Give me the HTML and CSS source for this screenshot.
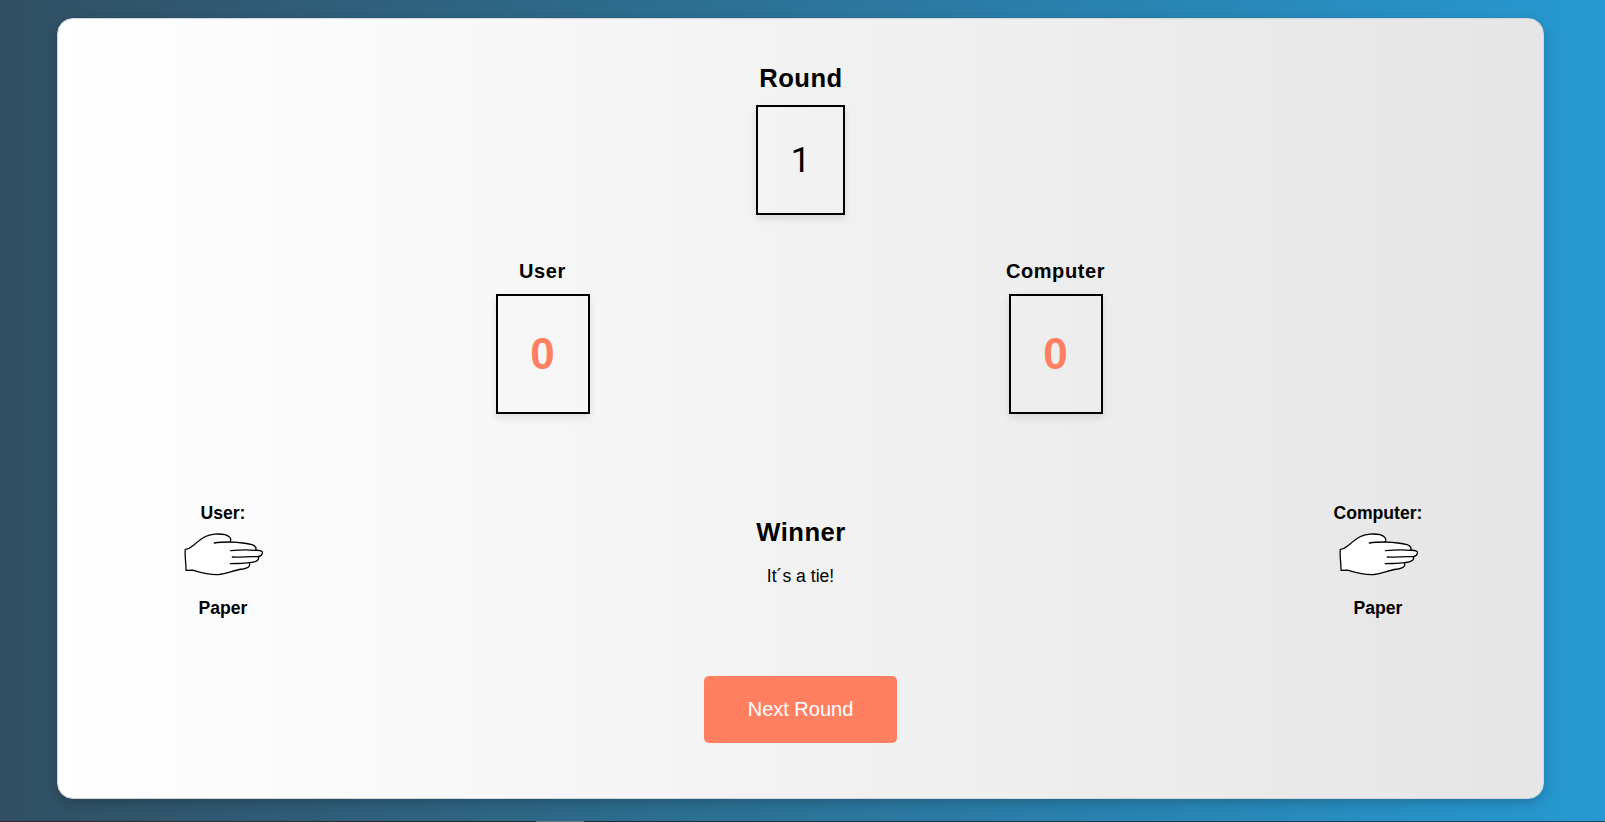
FILE: index.html
```html
<!DOCTYPE html>
<html lang="en">
<head>
<meta charset="utf-8">
<title>Rock Paper Scissors</title>
<link rel="stylesheet" href="styles.css">
</head>
<body>
<svg class="defs" aria-hidden="true">
  <symbol id="paper" viewBox="0 0 80.500 44">
    <path d="M2.300 17.300 C6 17 8 15.500 10.500 13.200 C15 9.500 18 7 22 4.800 C27 2 36 1.300 42 2.700 C46 4 49 6 47.200 10 C55 10.300 63 11 69 12.700 C73 14 73.500 16 72.600 18.300 C77 18 80 19 79.500 21.200 C78.500 24 76.500 24.500 75 24.700 C77 27.500 74 30 66.500 30.700 C67.500 34.500 65 36.200 60 37 C51 38 45 41.300 36 42.500 C25 43 16 40 10 38.200 L3 38.300 C3.200 31 1.500 24 2.300 17.300 Z" fill="#fff" stroke="#000" stroke-width="1.300" stroke-linejoin="round"/>
    <path d="M31.300 11 C36 10.200 42 10 47.200 10 M47.700 18.600 C55 18 64 17.700 72.600 18.300 M49.300 25 C57 25.500 68 24 75 24.700 M47.300 31.700 C54 31.200 60 32 66.500 30.700" fill="none" stroke="#000" stroke-width="1.300" stroke-linecap="round"/>
  </symbol>
</svg>
<main class="card">
  <section class="round">
    <h2 class="title">Round</h2>
    <div class="round-box">1</div>
  </section>
  <section class="scores">
    <div class="score">
      <h3 class="score-name">User</h3>
      <div class="score-box">0</div>
    </div>
    <div class="score">
      <h3 class="score-name">Computer</h3>
      <div class="score-box">0</div>
    </div>
  </section>
  <section class="result">
    <div class="pick">
      <p class="pick-text">User:</p>
      <svg class="hand"><use href="#paper"/></svg>
      <p class="pick-text">Paper</p>
    </div>
    <div class="winner">
      <h2 class="title">Winner</h2>
      <p class="winner-text">It´s a tie!</p>
    </div>
    <div class="pick">
      <p class="pick-text">Computer:</p>
      <svg class="hand"><use href="#paper"/></svg>
      <p class="pick-text">Paper</p>
    </div>
  </section>
  <button class="next">Next Round</button>
</main>
<footer class="strip"><span class="strip-mark"></span></footer>
</body>
</html>
```
FILE: styles.css
```css
* { box-sizing: border-box; margin: 0; padding: 0; }
body {
  height: 822px;
  padding-top: 18px;
  display: flex;
  flex-direction: column;
  overflow: hidden;
  font-family: "Liberation Sans", Arial, sans-serif;
  color: #000;
  background: linear-gradient(to right, #314f62, #2699d2);
}
.defs { position: absolute; width: 0; height: 0; }
.card {
  width: 1487px;
  height: 781px;
  margin-left: 57px;
  padding-top: 43px;
  display: flex;
  flex-direction: column;
  align-items: center;
  border: 1px solid #d3d6d8;
  border-radius: 16px;
  background: linear-gradient(to right, #fff, #e5e5e5) border-box;
  box-shadow: 0 4px 12px rgba(0, 0, 0, .2);
}
.round { height: 193px; display: flex; flex-direction: column; align-items: center; }
.title { padding-left: 1px; font-size: 25.6px; line-height: 32px; letter-spacing: .5px; }
.round-box {
  width: 89px;
  height: 110px;
  margin-top: 11px;
  display: grid;
  place-items: center;
  border: 2px solid #000;
  font-family: Roboto, sans-serif;
  font-size: 35px;
  box-shadow: 0 4px 8px rgba(0, 0, 0, .1);
}
.scores { width: 1026px; height: 238px; margin-right: 3px; display: flex; }
.score { flex: 1; display: flex; flex-direction: column; align-items: center; }
.score-name { font-size: 20px; line-height: 32px; letter-spacing: .6px; }
.score-box {
  width: 94px;
  height: 120px;
  margin-top: 7px;
  display: grid;
  place-items: center;
  border: 2px solid #000;
  color: #ff8061;
  font-size: 44px;
  font-weight: bold;
  box-shadow: 0 4px 8px rgba(0, 0, 0, .1);
}
.result { width: 1319px; height: 183px; padding-top: 10px; display: flex; justify-content: space-between; }
.pick { width: 164px; display: flex; flex-direction: column; align-items: center; }
.pick-text { font-size: 17.6px; font-weight: bold; line-height: 20px; }
.hand { width: 80.5px; height: 44px; margin: 9px 0 22px; }
.winner { padding-top: 13px; text-align: center; }
.winner-text { margin-top: 18px; font-size: 17.6px; line-height: 20px; }
.next {
  width: 193px;
  height: 67px;
  border: 0;
  border-radius: 5px;
  background: #ff8061;
  color: #fff;
  font: 20px "Liberation Sans", Arial, sans-serif;
}
.strip { height: 1px; margin-top: auto; background: linear-gradient(to right, #3b2030, #2b2b2b 33%, #1d4560); }
.strip-mark { display: block; width: 48px; height: 1px; margin-left: 536px; background: #777; }
```
